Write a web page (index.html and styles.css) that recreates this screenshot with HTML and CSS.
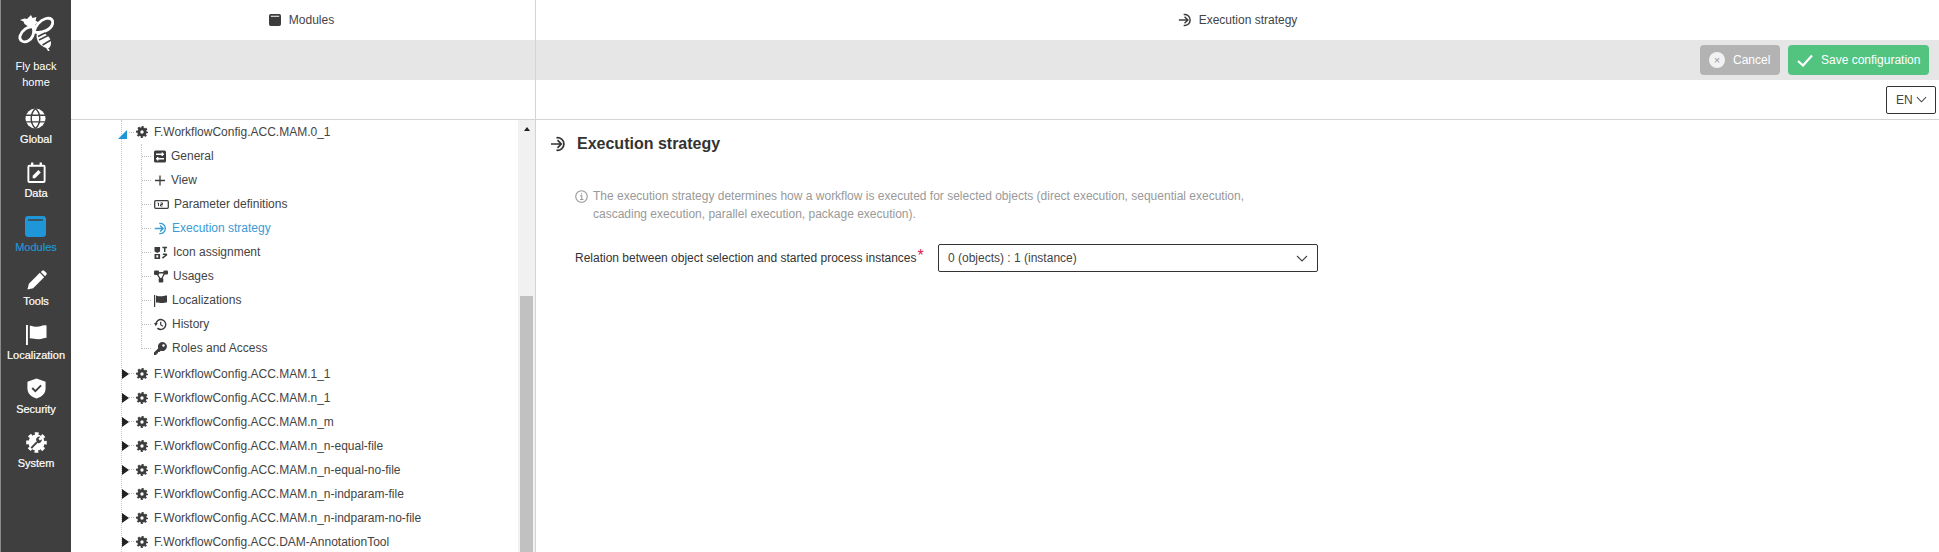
FILE: index.html
```html
<!DOCTYPE html>
<html lang="en">
<head>
<meta charset="utf-8">
<title>Execution strategy</title>
<link rel="stylesheet" href="styles.css">
</head>
<body>
<svg class="sprite" xmlns="http://www.w3.org/2000/svg">
  <symbol id="i-gear" viewBox="0 0 12 12">
    <circle cx="6" cy="6" r="3.200" fill="none" stroke="currentColor" stroke-width="3"/>
    <circle cx="6" cy="6" r="5" fill="none" stroke="currentColor" stroke-width="2" stroke-dasharray="2 1.930" stroke-dashoffset="1"/>
  </symbol>
  <symbol id="i-exec" viewBox="0 0 16 16">
    <path d="M1 8h10M7.500 4.200 11.300 8l-3.800 3.800M6.500 1.800a6.300 6.300 0 1 1 0 12.400" fill="none" stroke="currentColor" stroke-width="1.700"/>
  </symbol>
  <symbol id="i-module" viewBox="0 0 20 20">
    <path fill-rule="evenodd" d="M3 0h14a3 3 0 0 1 3 3v14a3 3 0 0 1-3 3H3a3 3 0 0 1-3-3V3a3 3 0 0 1 3-3zM3 3v1.600h14V3z" fill="currentColor"/>
  </symbol>
  <symbol id="i-general" viewBox="0 0 12 12">
    <path fill-rule="evenodd" d="M1.500 0h9A1.500 1.500 0 0 1 12 1.500v9a1.500 1.500 0 0 1-1.500 1.500h-9A1.500 1.500 0 0 1 0 10.500v-9A1.500 1.500 0 0 1 1.500 0zM2 3v1.400h5.500V5.500h1.500V4.400H10V3H9V2H7.500v1zM2 7.500v1.400h1V10h1.500V8.900H10V7.500H4.500V6.500H3v1z" fill="currentColor"/>
  </symbol>
  <symbol id="i-plus" viewBox="0 0 12 12">
    <path d="M6 1v10M1 6h10" stroke="currentColor" stroke-width="1.300" fill="none"/>
  </symbol>
  <symbol id="i-param" viewBox="0 0 15 10">
    <rect x=".7" y="1.200" width="13.600" height="7.600" rx="1" fill="none" stroke="currentColor" stroke-width="1.300"/>
    <path d="M3.500 3.500h1v3M6.500 3.500h2v1.500h-2v1.500h2" fill="none" stroke="currentColor"/>
  </symbol>
  <symbol id="i-assign" viewBox="0 0 14 14">
    <path d="M0 1h6v5l-3 1.500L0 6zM0 8.500h6V14H0zM2 10v2.500h2V10z" fill="currentColor" fill-rule="evenodd"/>
    <path d="M8.500 1.500h5M11 1.500v5M9 9l4 0M8.500 13l5-4" fill="none" stroke="currentColor" stroke-width="1.600"/>
  </symbol>
  <symbol id="i-usage" viewBox="0 0 14 12">
    <path d="M2.500 2.500 11 2 7 9.500z" fill="none" stroke="currentColor" stroke-width="1.300"/>
    <rect x="0" y="0" width="5" height="4.500" rx="1" fill="currentColor"/>
    <rect x="9.500" y="0" width="4.500" height="4" rx="1" fill="currentColor"/>
    <rect x="4.700" y="7.500" width="4.600" height="4.500" rx="1" fill="currentColor"/>
  </symbol>
  <symbol id="i-lflag" viewBox="0 0 13 13">
    <path d="M.6 1v12" stroke="currentColor" stroke-width="1.200" fill="none"/>
    <path d="M2 1.500c3 1 5.500 1 7.500.5s2.500-.5 3.500-.5v7c-2 0-3 .6-5 .6s-3.500-.5-6-.6z" fill="currentColor"/>
  </symbol>
  <symbol id="i-history" viewBox="0 0 14 14">
    <path d="M2 7a5.300 5.300 0 1 1 1.700 3.900" fill="none" stroke="currentColor" stroke-width="1.500"/>
    <path d="M0 4.500h4L2 8z" transform="translate(0 1)" fill="currentColor"/>
    <path d="M7.200 4v3.300l2.300 1.500" fill="none" stroke="currentColor" stroke-width="1.300"/>
  </symbol>
  <symbol id="i-key" viewBox="0 0 13 13">
    <path fill-rule="evenodd" d="M8.500 0a4.500 4.500 0 1 1-1.700 8.700L5.500 10H4v1.500H2.500V13H0v-2.500l4.300-4.300A4.500 4.500 0 0 1 8.500 0zM9.500 2.200a1.300 1.300 0 1 0 0 2.600 1.300 1.300 0 0 0 0-2.600z" fill="currentColor"/>
  </symbol>
  <symbol id="i-info" viewBox="0 0 14 14">
    <circle cx="7" cy="7" r="6.200" fill="none" stroke="currentColor" stroke-width="1.200"/>
    <path d="M5.500 6.200H7.300V10M5.500 10.200h3.600M7 3.400v1.400" fill="none" stroke="currentColor" stroke-width="1.100"/>
  </symbol>
  <symbol id="i-chev" viewBox="0 0 12 7">
    <path d="M1 1l5 5 5-5" fill="none" stroke="currentColor" stroke-width="1.100"/>
  </symbol>
</svg>

<div class="app">
  <nav class="rail">
    <a class="logo">
      <svg class="logo-svg" viewBox="0 0 36 36">
        <path d="M13 0l1.500 3 4-1-1 3.500 3 2-3 1.500v3l-5 1-6-4-1-2.500L2 5l4.500-1.500L9 4z" fill="#fff"/>
        <path d="M16 17C17 11 22 5 28 3.500C33 2.500 35.500 5 34.500 9C33 14 25 19 16 17z" fill="#3f3f3f" stroke="#fff" stroke-width="2.800"/>
        <path d="M15 12C10 11 4 15 2 21C1 26 6 28 10 26C14 24 17 19 15 12z" fill="#3f3f3f" stroke="#fff" stroke-width="2.800"/>
        <path d="M19 18C25 16 33 21 33 28C33 32 31 34 28 33C22 31 17 25 19 18z" fill="#fff"/>
        <path d="M21 25 31 20M20 21.500 27 18M24.500 30 33 25" stroke="#3f3f3f" stroke-width="1.500" fill="none"/>
        <path d="M29 33l2 3" stroke="#fff" stroke-width="1.600"/>
      </svg>
      <span class="logo-text">Fly back<br>home</span>
    </a>
    <a class="rail-item">
      <svg class="rail-icon" viewBox="0 0 22 22">
        <circle cx="11" cy="11" r="10.500" fill="#fff"/>
        <path d="M.5 7.500h21M.5 14.500h21M11 .5C5 6 5 16 11 21.500M11 .5C17 6 17 16 11 21.500" fill="none" stroke="#3f3f3f" stroke-width="1.500"/>
      </svg>
      <span>Global</span>
    </a>
    <a class="rail-item">
      <svg class="rail-icon" viewBox="0 0 22 22">
        <path d="M3.500 4h15a1 1 0 0 1 1 1v15a1 1 0 0 1-1 1h-15a1 1 0 0 1-1-1V5a1 1 0 0 1 1-1z" fill="none" stroke="#fff" stroke-width="2"/>
        <path d="M6.500 .5v4M15.500 .5v4" stroke="#fff" stroke-width="2.400"/>
        <path d="M7 17v-2.500L13 8.500l2.500 2.500-6 6z" fill="#fff"/>
      </svg>
      <span>Data</span>
    </a>
    <a class="rail-item active">
      <svg class="rail-icon" viewBox="0 0 22 22"><use href="#i-module"/></svg>
      <span>Modules</span>
    </a>
    <a class="rail-item">
      <svg class="rail-icon" viewBox="0 0 22 22">
        <path d="M1.500 20.500l1.500-6L14.500 3l4.500 4.500L7.500 19z" fill="#fff"/>
        <path d="M15.500 2l1.500-1.300a1.500 1.500 0 0 1 2 0l2.300 2.300a1.500 1.500 0 0 1 0 2L20 6.500z" fill="#fff"/>
      </svg>
      <span>Tools</span>
    </a>
    <a class="rail-item">
      <svg class="rail-icon" viewBox="0 0 22 22">
        <path d="M1 1v21" stroke="#fff" stroke-width="2"/>
        <path d="M4 1.500c6 2 9 1.500 12 .5s4-.6 5.500-.5v13c-3 0-4.500 1.500-8.500 1.500s-5-1-9-1z" fill="#fff"/>
      </svg>
      <span>Localization</span>
    </a>
    <a class="rail-item">
      <svg class="rail-icon" viewBox="0 0 22 22">
        <path d="M11 .5l9.500 3.500v7c0 5-4 9-9.500 10.500C5.500 20 1.500 16 1.500 11V4z" fill="#fff"/>
        <path d="M6.500 10.500l3.300 3.300 6-6" fill="none" stroke="#3f3f3f" stroke-width="2"/>
      </svg>
      <span>Security</span>
    </a>
    <a class="rail-item">
      <svg class="rail-icon" viewBox="0 0 22 22">
        <circle cx="11" cy="11" r="8.500" fill="#fff"/>
        <circle cx="11" cy="11" r="9.300" fill="none" stroke="#fff" stroke-width="3" stroke-dasharray="4 3.300" stroke-dashoffset="2"/>
        <path d="M5.500 17 11.500 10.500" stroke="#3f3f3f" stroke-width="2" fill="none"/>
        <path d="M10.500 8.500a3.500 3.500 0 0 1 4.500-3.500l-2 2 1.500 2 2-1.500a3.500 3.500 0 0 1-4.500 4z" fill="#3f3f3f"/>
      </svg>
      <span>System</span>
    </a>
  </nav>

  <div class="workspace">
    <section class="pane pane-left">
      <header class="title title-left"><svg class="title-icon"><use href="#i-module"/></svg><span>Modules</span></header>
      <div class="toolbar"></div>
      <div class="subbar"></div>
      <div class="tree-wrap">
        <div class="tree">
          <div class="row"><i class="tog tog-open"></i><i class="stub"></i><svg class="gear"><use href="#i-gear"/></svg><span>F.WorkflowConfig.ACC.MAM.0_1</span></div>
          <div class="children">
            <div class="child"><i class="conn"></i><svg class="ci w12"><use href="#i-general"/></svg><span>General</span></div>
            <div class="child"><i class="conn"></i><svg class="ci w12"><use href="#i-plus"/></svg><span>View</span></div>
            <div class="child"><i class="conn"></i><svg class="ci w15"><use href="#i-param"/></svg><span>Parameter definitions</span></div>
            <div class="child on"><i class="conn"></i><svg class="ci w13"><use href="#i-exec"/></svg><span>Execution strategy</span></div>
            <div class="child"><i class="conn"></i><svg class="ci w14"><use href="#i-assign"/></svg><span>Icon assignment</span></div>
            <div class="child"><i class="conn"></i><svg class="ci w14"><use href="#i-usage"/></svg><span>Usages</span></div>
            <div class="child"><i class="conn"></i><svg class="ci w13"><use href="#i-lflag"/></svg><span>Localizations</span></div>
            <div class="child"><i class="conn"></i><svg class="ci w13"><use href="#i-history"/></svg><span>History</span></div>
            <div class="child"><i class="conn conn-last"></i><svg class="ci w13"><use href="#i-key"/></svg><span>Roles and Access</span></div>
          </div>
          <div class="row"><i class="tog"></i><i class="stub"></i><svg class="gear"><use href="#i-gear"/></svg><span>F.WorkflowConfig.ACC.MAM.1_1</span></div>
          <div class="row"><i class="tog"></i><i class="stub"></i><svg class="gear"><use href="#i-gear"/></svg><span>F.WorkflowConfig.ACC.MAM.n_1</span></div>
          <div class="row"><i class="tog"></i><i class="stub"></i><svg class="gear"><use href="#i-gear"/></svg><span>F.WorkflowConfig.ACC.MAM.n_m</span></div>
          <div class="row"><i class="tog"></i><i class="stub"></i><svg class="gear"><use href="#i-gear"/></svg><span>F.WorkflowConfig.ACC.MAM.n_n-equal-file</span></div>
          <div class="row"><i class="tog"></i><i class="stub"></i><svg class="gear"><use href="#i-gear"/></svg><span>F.WorkflowConfig.ACC.MAM.n_n-equal-no-file</span></div>
          <div class="row"><i class="tog"></i><i class="stub"></i><svg class="gear"><use href="#i-gear"/></svg><span>F.WorkflowConfig.ACC.MAM.n_n-indparam-file</span></div>
          <div class="row"><i class="tog"></i><i class="stub"></i><svg class="gear"><use href="#i-gear"/></svg><span>F.WorkflowConfig.ACC.MAM.n_n-indparam-no-file</span></div>
          <div class="row"><i class="tog"></i><i class="stub"></i><svg class="gear"><use href="#i-gear"/></svg><span>F.WorkflowConfig.ACC.DAM-AnnotationTool</span></div>
        </div>
        <div class="scrollbar">
          <div class="sb-btn"><i class="sb-up"></i></div>
          <div class="sb-thumb"></div>
        </div>
      </div>
    </section>

    <section class="pane pane-right">
      <header class="title"><svg class="title-icon title-icon-exec"><use href="#i-exec"/></svg><span>Execution strategy</span></header>
      <div class="toolbar toolbar-right">
        <button class="btn btn-cancel"><i class="x-dot">×</i>Cancel</button>
        <button class="btn btn-save"><svg class="check" viewBox="0 0 16 13"><path d="M1 7l5 4.500L15 1.500" fill="none" stroke="#fff" stroke-width="2.200"/></svg>Save configuration</button>
      </div>
      <div class="subbar subbar-right">
        <div class="lang">EN<svg class="lang-chev"><use href="#i-chev"/></svg></div>
      </div>
      <main class="content">
        <h1 class="heading"><svg class="heading-icon"><use href="#i-exec"/></svg>Execution strategy</h1>
        <div class="hint">
          <svg class="hint-icon"><use href="#i-info"/></svg>
          <p>The execution strategy determines how a workflow is executed for selected objects (direct execution, sequential execution, cascading execution, parallel execution, package execution).</p>
        </div>
        <div class="field">
          <label class="field-label">Relation between object selection and started process instances<sup class="req">*</sup></label>
          <div class="select"><span>0 (objects) : 1 (instance)</span><svg class="select-chev"><use href="#i-chev"/></svg></div>
        </div>
      </main>
    </section>
  </div>
</div>
</body>
</html>
```
FILE: styles.css
```css
* { box-sizing: border-box; }
html, body { margin: 0; height: 552px; overflow: hidden; background: #fff; }
body { font-family: "Liberation Sans", Arial, sans-serif; font-size: 12px; color: #444; }
.sprite { display: none; }
i { font-style: normal; display: block; }
.app { display: flex; height: 552px; }

.rail { width: 71px; flex: none; background: #3f3f3f; border-left: 1px solid #8a8a8a; color: #fff; display: flex; flex-direction: column; align-items: center; }
.logo { height: 102px; padding-top: 15px; display: flex; flex-direction: column; align-items: center; }
.logo-svg { width: 36px; height: 36px; }
.logo-text { margin-top: 8px; font-size: 11px; line-height: 15.500px; text-align: center; }
.rail-item { height: 54px; padding-top: 6px; display: flex; flex-direction: column; align-items: center; font-size: 11px; line-height: 14px; -webkit-text-stroke: 0.2px currentColor; }
.rail-icon { width: 21px; height: 21px; margin-bottom: 3px; }
.rail-item.active { color: #1f96d8; }

.workspace { flex: 1; display: grid; grid-template-columns: 465px 1fr; min-width: 0; }
.pane { display: flex; flex-direction: column; min-width: 0; height: 552px; }
.pane-left { border-right: 1px solid #d4d4d4; }
.title { height: 40px; flex: none; display: flex; align-items: center; justify-content: center; gap: 8px; color: #444; }
.title-left { padding-right: 3px; }
.title-icon { width: 12px; height: 12px; color: #3c3c3c; }
.title-icon-exec { width: 14px; height: 14px; margin-right: -1px; }
.toolbar { height: 40px; flex: none; background: #e6e6e6; }
.toolbar-right { display: flex; justify-content: flex-end; align-items: center; gap: 8px; padding-right: 10px; }
.subbar { height: 40px; flex: none; border-bottom: 1px solid #d4d4d4; }
.subbar-right { display: flex; justify-content: flex-end; align-items: center; padding: 0 3px 0 0; }

.btn { height: 30px; border: 0; border-radius: 4px; color: #fff; font: 12px "Liberation Sans", Arial, sans-serif; display: flex; align-items: center; padding: 0; }
.btn-cancel { width: 80px; background: #b3b3b3; padding-left: 9px; gap: 8px; }
.x-dot { width: 16px; height: 16px; border-radius: 50%; background: #f2f2f2; color: #999; font-size: 11px; line-height: 16px; text-align: center; }
.btn-save { width: 141px; background: #52c480; padding-left: 9px; gap: 8px; }
.check { width: 16px; height: 13px; }
.lang { width: 50px; height: 28px; border: 1px solid #333; border-radius: 2px; display: flex; align-items: center; padding-left: 9px; gap: 3px; color: #444; }
.lang-chev { width: 11px; height: 7px; }

.tree-wrap { flex: 1; display: flex; min-height: 0; overflow: hidden; }
.tree { flex: 1; margin-left: 50px; border-left: 1px dotted #c8c8c8; min-width: 0; height: 440px; }
.row { height: 24px; display: flex; align-items: center; color: #444; white-space: nowrap; }
.tog { width: 0; height: 0; border-style: solid; border-width: 5px 0 5px 7px; border-color: transparent transparent transparent #222; }
.tog-open { margin-left: -4px; margin-right: 2px; margin-top: 5px; border-width: 0 0 9px 9px; border-color: transparent transparent #1f96d8 transparent; }
.stub { width: 5px; height: 1px; background: repeating-linear-gradient(90deg, #bbb 0 1px, transparent 1px 2px); }
.gear { width: 12px; height: 12px; margin-left: 2px; margin-right: 6px; color: #3c3c3c; }
.children { margin-left: 19px; padding-bottom: 1.500px; }
.child { height: 24px; display: flex; align-items: center; gap: 5px; color: #444; white-space: nowrap; }
.child.on { color: #3a9bd5; }
.conn { width: 11px; align-self: stretch; margin-right: -3px; border-left: 1px dotted #c8c8c8; background: repeating-linear-gradient(90deg, #bbb 0 1px, transparent 1px 2px) left center / 100% 1px no-repeat; }
.conn-last { align-self: flex-start; height: 13px; background-position: left bottom; }
.ci { height: 13px; color: #3c3c3c; flex: none; }
.child.on .ci { color: #3a9bd5; }
.w12 { width: 12px; }
.w13 { width: 13px; }
.w14 { width: 14px; }
.w15 { width: 15px; }

.scrollbar { width: 17px; flex: none; background: #f1f1f1; display: flex; flex-direction: column; align-items: center; }
.sb-btn { width: 17px; height: 17px; display: flex; align-items: center; justify-content: center; }
.sb-up { width: 0; height: 0; border-style: solid; border-width: 0 3.500px 4px 3.500px; border-color: transparent transparent #222 transparent; }
.sb-thumb { width: 13px; margin-top: 159px; flex: 1; background: #c1c1c1; }

.content { flex: 1; padding: 14px 0 0 14px; }
.heading { margin: 0; height: 20px; display: flex; align-items: center; gap: 11px; font-size: 16px; font-weight: 700; color: #333; line-height: 20px; }
.heading-icon { width: 16px; height: 16px; }
.hint { margin: 33px 0 0 25px; width: 700px; display: flex; gap: 5px; color: #999; line-height: 18px; }
.hint p { margin: 0; width: 680px; }
.hint-icon { width: 13px; height: 13px; margin-top: 3px; flex: none; color: #999; }
.field { margin: 21px 0 0 25px; display: flex; align-items: center; }
.field-label { width: 363px; color: #333; flex: none; }
.req { color: #d9224d; font-size: 16px; line-height: 0; margin-left: 1px; vertical-align: 1px; }
.select { width: 380px; height: 28px; border: 1px solid #333; border-radius: 2px; display: flex; align-items: center; justify-content: space-between; padding: 0 9px; color: #444; }
.select-chev { width: 12px; height: 7px; }
```
